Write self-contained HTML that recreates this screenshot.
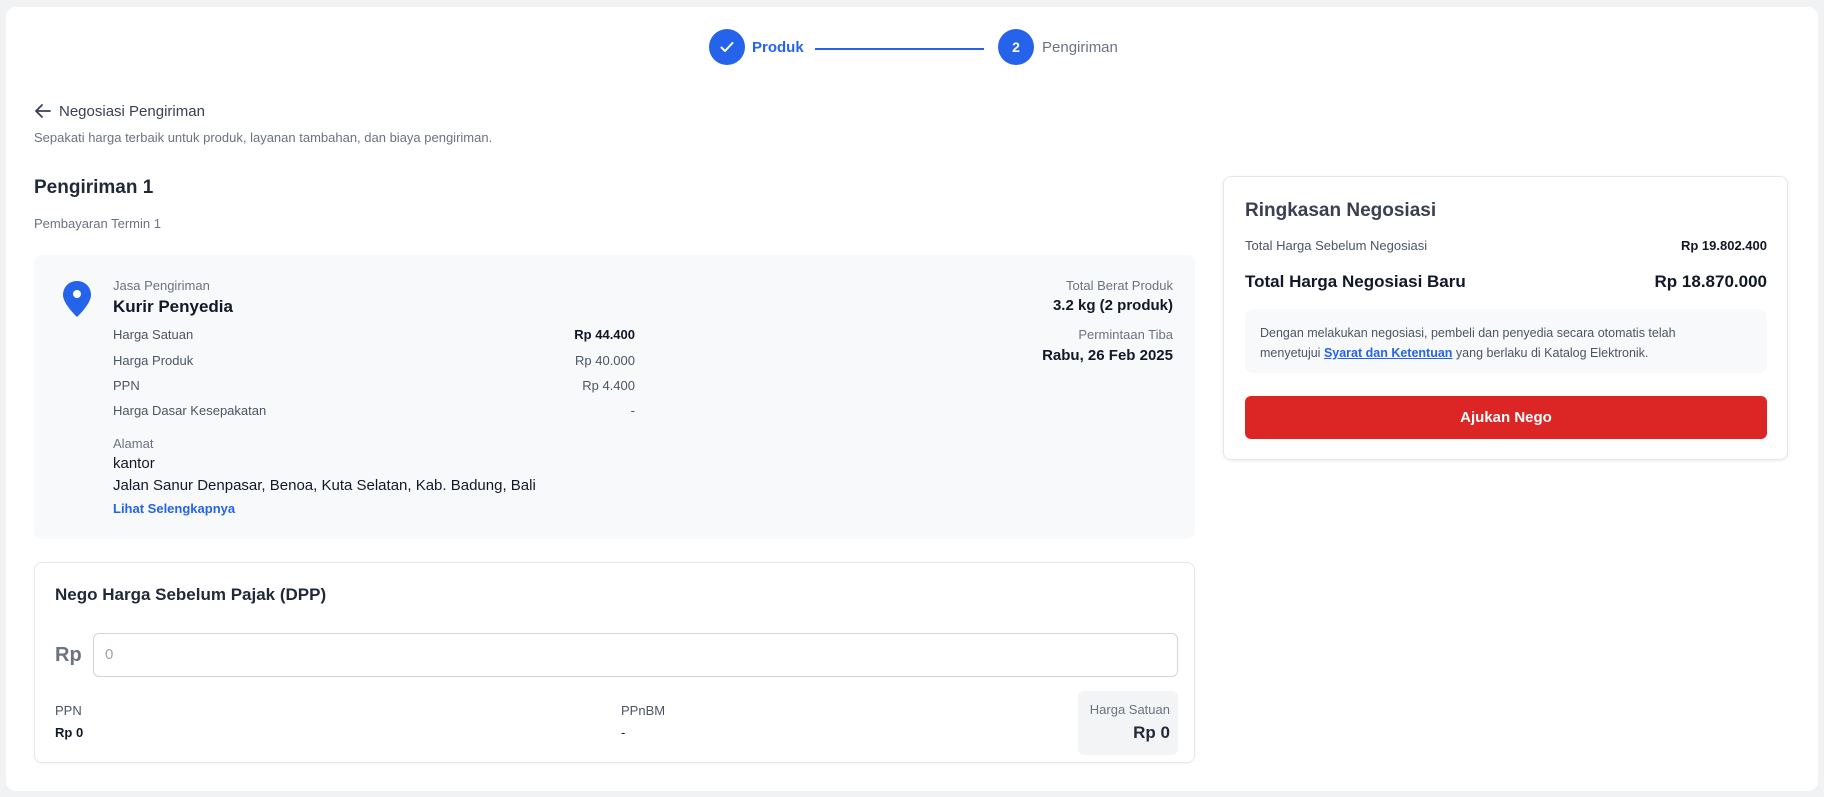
<!DOCTYPE html>
<html><head><meta charset="utf-8"><style>
*{box-sizing:border-box;margin:0;padding:0}
body{width:1824px;height:797px;background:#f1f2f4;font-family:"Liberation Sans",Arial,sans-serif;color:#1f2937;position:relative;overflow:hidden}
.abs{position:absolute;white-space:nowrap}
.card{position:absolute;left:6px;top:7px;width:1812px;height:784px;background:#fff;border-radius:10px}
.circ{position:absolute;width:36px;height:36px;border-radius:50%;background:#2563eb;color:#fff;font-weight:bold;font-size:14px;display:flex;align-items:center;justify-content:center}
.g{color:#6b7280}
.box{position:absolute;left:34px;top:255px;width:1161px;height:284px;background:#f8f9fb;border-radius:8px}
.row{position:absolute;left:113px;width:522px;font-size:13px;color:#4b5563;display:flex;justify-content:space-between}
</style></head><body>
<div class="card"></div>
<div class="circ" style="left:709px;top:29px"><svg width="18" height="18" viewBox="0 0 18 18"><path d="M3.5 9.5l3.5 3.5 7.5-8" stroke="#fff" stroke-width="2" fill="none" stroke-linecap="round" stroke-linejoin="round"/></svg></div>
<div class="abs" style="left:752px;top:39px;font-size:15px;color:#2563eb;font-weight:bold">Produk</div>
<div class="abs" style="left:815px;top:48px;width:169px;height:1.5px;background:#2563eb"></div>
<div class="circ" style="left:998px;top:29px">2</div>
<div class="abs" style="left:1042px;top:39px;font-size:15px;color:#6b7280">Pengiriman</div>

<svg class="abs" style="left:34px;top:103px" width="18" height="16" viewBox="0 0 18 16"><path d="M16 8H2M8 2L2 8l6 6" stroke="#374151" stroke-width="1.8" fill="none" stroke-linecap="round" stroke-linejoin="round"/></svg>
<div class="abs" style="left:59px;top:103px;font-size:15px;color:#374151">Negosiasi Pengiriman</div>
<div class="abs g" style="left:34px;top:130px;font-size:13px">Sepakati harga terbaik untuk produk, layanan tambahan, dan biaya pengiriman.</div>
<div class="abs" style="left:34px;top:177px;font-size:19px;font-weight:bold;color:#1f2937">Pengiriman 1</div>
<div class="abs g" style="left:34px;top:216px;font-size:13px">Pembayaran Termin 1</div>

<div class="box"></div>
<svg class="abs" style="left:61px;top:280px" width="32" height="38" viewBox="0 0 32 38"><path d="M16 1C8 1 2 7 2 15c0 9 14 22 14 22s14-13 14-22C30 7 24 1 16 1z" fill="#2563eb"/><circle cx="16" cy="14" r="4" fill="#fff"/></svg>
<div class="abs g" style="left:113px;top:278px;font-size:13px">Jasa Pengiriman</div>
<div class="abs" style="left:113px;top:297px;font-size:17px;font-weight:bold;color:#111827">Kurir Penyedia</div>
<div class="row" style="top:327px"><span>Harga Satuan</span><span style="color:#111827;font-weight:bold">Rp 44.400</span></div>
<div class="row" style="top:353px"><span>Harga Produk</span><span>Rp 40.000</span></div>
<div class="row" style="top:378px"><span>PPN</span><span>Rp 4.400</span></div>
<div class="row" style="top:403px"><span>Harga Dasar Kesepakatan</span><span>-</span></div>
<div class="abs g" style="left:113px;top:436px;font-size:13px">Alamat</div>
<div class="abs" style="left:113px;top:455px;font-size:15px;color:#111827">kantor</div>
<div class="abs" style="left:113px;top:477px;font-size:15px;color:#111827">Jalan Sanur Denpasar, Benoa, Kuta Selatan, Kab. Badung, Bali</div>
<div class="abs" style="left:113px;top:501px;font-size:13px;color:#2563eb;font-weight:bold">Lihat Selengkapnya</div>
<div class="abs g" style="right:651px;top:278px;font-size:13px">Total Berat Produk</div>
<div class="abs" style="right:651px;top:297px;font-size:15px;font-weight:bold;color:#111827">3.2 kg (2 produk)</div>
<div class="abs g" style="right:651px;top:327px;font-size:13px">Permintaan Tiba</div>
<div class="abs" style="right:651px;top:347px;font-size:15px;font-weight:bold;color:#111827">Rabu, 26 Feb 2025</div>

<div class="abs" style="left:34px;top:562px;width:1161px;height:201px;border:1px solid #e5e7eb;border-radius:8px;box-shadow:0 1px 2px rgba(0,0,0,.05)"></div>
<div class="abs" style="left:55px;top:585px;font-size:17px;font-weight:bold;color:#1f2937">Nego Harga Sebelum Pajak (DPP)</div>
<div class="abs" style="left:55px;top:644px;font-size:20px;font-weight:bold;color:#6b7280">Rp</div>
<div class="abs" style="left:93px;top:633px;width:1085px;height:44px;border:1px solid #d1d5db;border-radius:6px;font-size:15px;color:#9ca3af;padding:12px 11px">0</div>
<div class="abs" style="left:55px;top:703px;font-size:13px;color:#4b5563">PPN</div>
<div class="abs" style="left:55px;top:725px;font-size:13px;font-weight:bold;color:#111827">Rp 0</div>
<div class="abs" style="left:621px;top:703px;font-size:13px;color:#4b5563">PPnBM</div>
<div class="abs" style="left:621px;top:725px;font-size:13px;color:#111827">-</div>
<div class="abs" style="left:1078px;top:691px;width:100px;height:64px;background:#f3f4f6;border-radius:6px"></div>
<div class="abs g" style="right:654px;top:702px;font-size:13px">Harga Satuan</div>
<div class="abs" style="right:654px;top:723px;font-size:17px;font-weight:bold;color:#1f2937">Rp 0</div>

<div class="abs" style="left:1223px;top:176px;width:565px;height:284px;border:1px solid #e5e7eb;border-radius:8px;box-shadow:0 1px 3px rgba(0,0,0,.08)"></div>
<div class="abs" style="left:1245px;top:200px;font-size:19px;font-weight:bold;color:#374151">Ringkasan Negosiasi</div>
<div class="abs" style="left:1245px;top:238px;font-size:13px;color:#4b5563">Total Harga Sebelum Negosiasi</div>
<div class="abs" style="right:57px;top:238px;font-size:13px;font-weight:bold;color:#111827">Rp 19.802.400</div>
<div class="abs" style="left:1245px;top:272px;font-size:17px;font-weight:bold;color:#111827">Total Harga Negosiasi Baru</div>
<div class="abs" style="right:57px;top:272px;font-size:17px;font-weight:bold;color:#111827">Rp 18.870.000</div>
<div class="abs" style="left:1245px;top:309px;width:522px;height:64px;background:#f8f9fb;border-radius:8px;padding:14px 80px 14px 15px;font-size:12.5px;line-height:20px;color:#4b5563;white-space:normal">Dengan melakukan negosiasi, pembeli dan penyedia secara otomatis telah menyetujui <span style="color:#2563eb;font-weight:bold;text-decoration:underline">Syarat dan Ketentuan</span> yang berlaku di Katalog Elektronik.</div>
<div class="abs" style="left:1245px;top:396px;width:522px;height:43px;background:#dc2626;border-radius:6px;color:#fff;font-weight:bold;font-size:15px;display:flex;align-items:center;justify-content:center">Ajukan Nego</div>
</body></html>
